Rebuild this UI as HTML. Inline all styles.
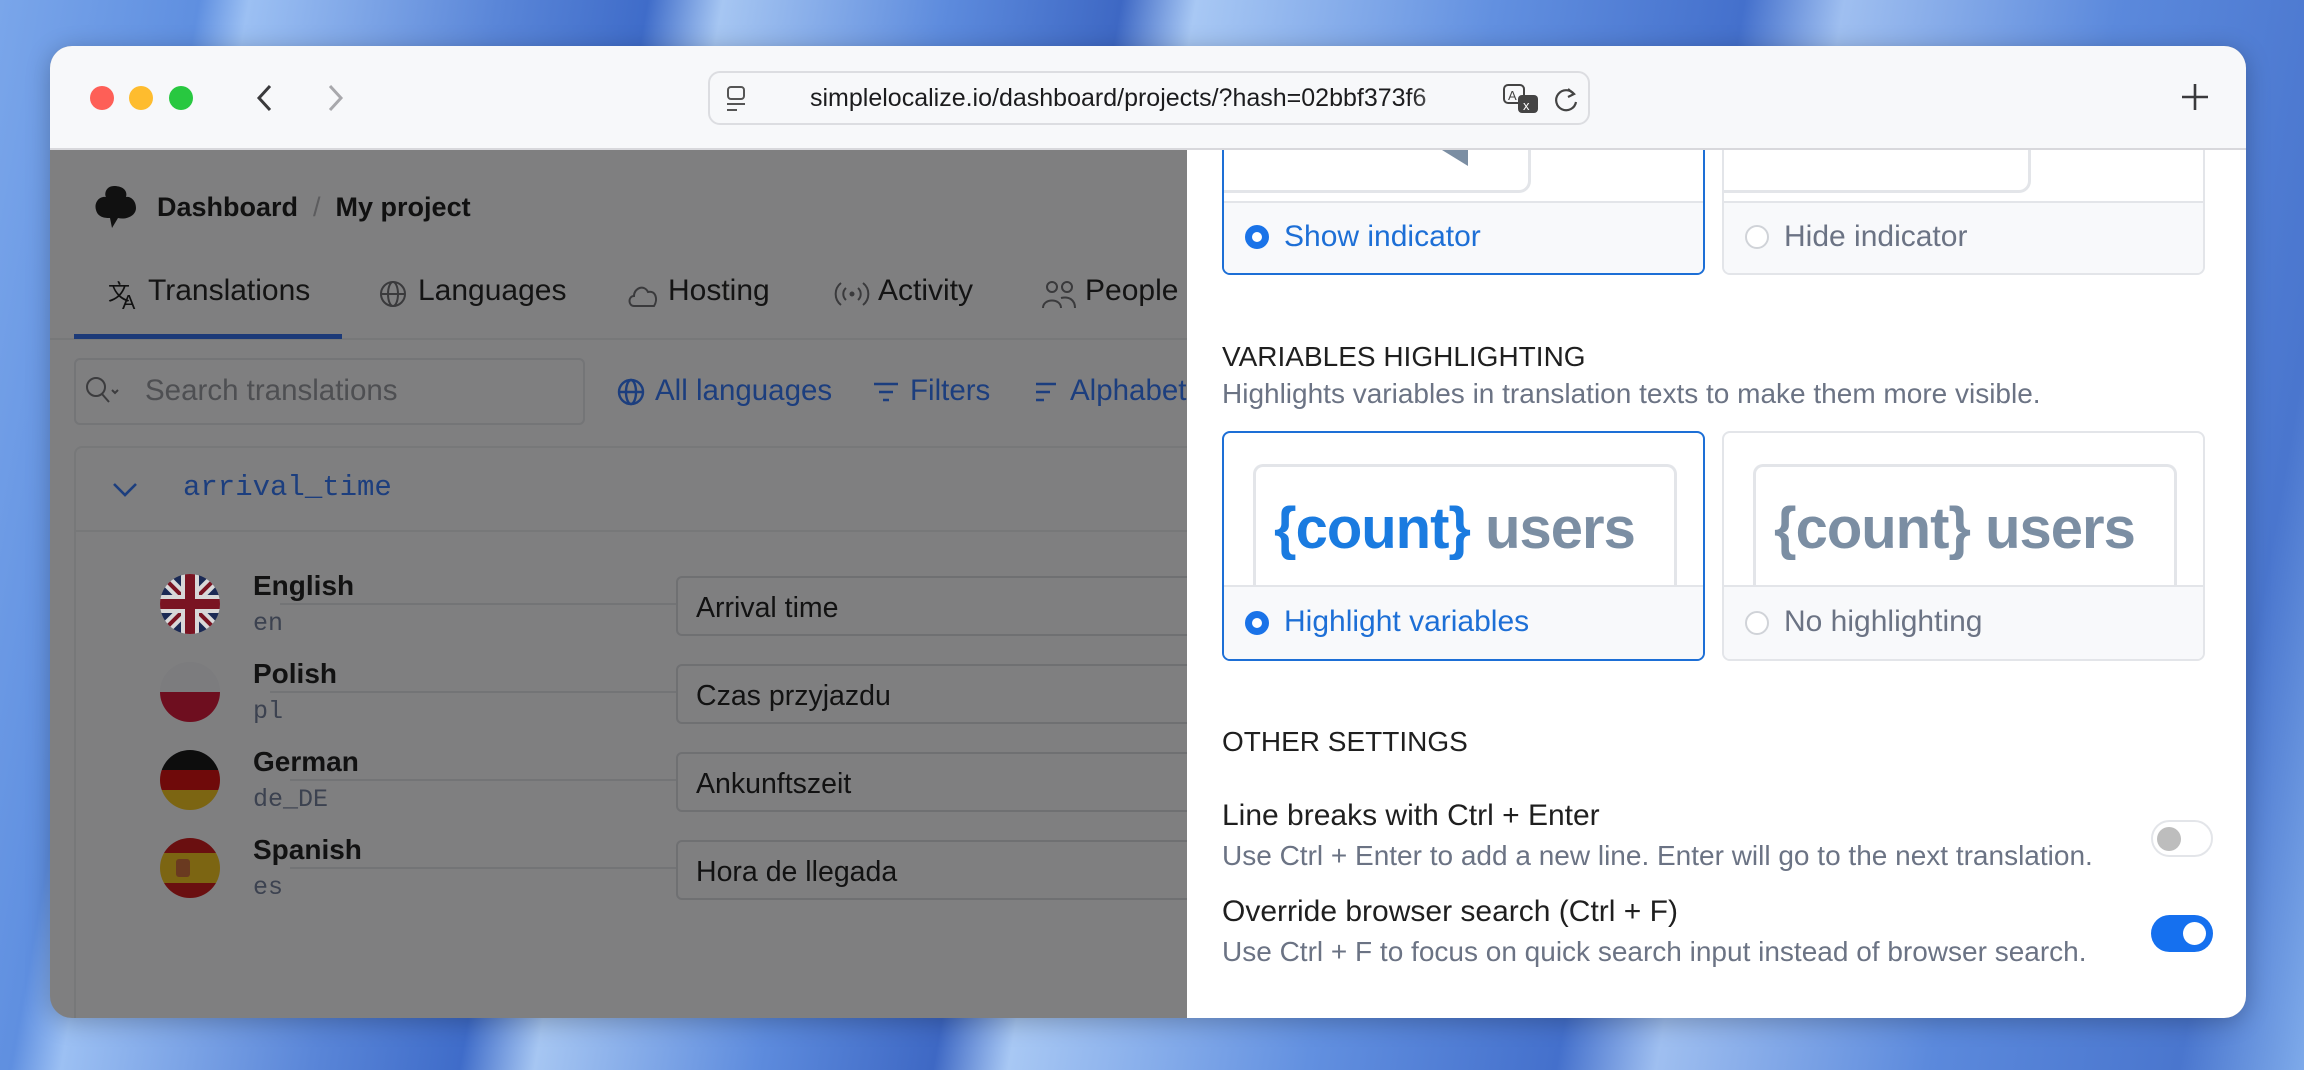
<!DOCTYPE html>
<html><head><meta charset="utf-8"><style>
*{box-sizing:border-box;margin:0;padding:0}
body{width:2304px;height:1070px;overflow:hidden;font-family:"Liberation Sans",sans-serif;position:relative;
background:linear-gradient(100deg,#7aa6ea 0%,#5f8fe0 8%,#9cc0f3 10%,#5a86d8 20%,#3f6cc9 26%,#a6c6f2 29%,#5d8bdd 38%,#3e68c4 45%,#a8c8f4 48%,#6290e0 60%,#4470cc 70%,#9fbff0 74%,#5b89dc 85%,#4a76ce 95%,#7eaaea 100%)}
.abs{position:absolute}
.win{left:50px;top:46px;width:2196px;height:972px;border-radius:22px;overflow:hidden;background:#7f7f80;box-shadow:0 4px 24px rgba(0,0,0,.25)}
.bar{left:0;top:0;width:2196px;height:104px;background:#f7f8fa;border-bottom:2px solid #d8d8dc;z-index:2}
.dot{width:24px;height:24px;border-radius:50%;top:40px}
.url{left:658px;top:25px;width:882px;height:54px;border:2px solid #dcdde1;border-radius:12px;background:#f7f8fa}
.tab{font-size:30px;color:#141414;top:228px}
.ico{stroke:#3a3a3c;fill:none;stroke-width:2}
.blue{color:#1c3e7e}
.panel{left:1137px;top:104px;width:1059px;height:868px;background:#fff;overflow:hidden}
.card{border:2px solid #e3e5e9;border-radius:8px;background:#fff;overflow:hidden}
.card.sel{border-color:#1d6fd6}
.foot{position:absolute;left:0;right:0;bottom:0;background:#f8f9fb;border-top:2px solid #e3e5e9}
.radio{position:absolute;left:21px;width:24px;height:24px;border-radius:50%}
.lbl{position:absolute;left:60px;font-size:30px}
.inner{position:absolute;border:3px solid #e3e5e9;border-bottom:none;border-radius:10px 10px 0 0;background:#fff}
.big{position:absolute;font-size:58px;font-weight:bold;letter-spacing:-1px;white-space:nowrap;color:#7b8ea3}
.h{font-size:28px;color:#1f1f1f;font-weight:500}
.d{font-size:28px;color:#6b7384}
.t{font-size:30px;color:#1f1f1f}
.tog{width:62px;height:37px;border-radius:19px}
.flag{width:60px;height:60px;border-radius:50%;overflow:hidden;left:110px}
.nm{left:203px;font-size:28px;font-weight:bold;color:#121212}
.cd{left:203px;font-family:"Liberation Mono",monospace;font-size:25px;color:#3c4250}
.inp{left:626px;width:560px;height:60px;border:2px solid #6f7072;border-radius:6px;background:#7f7f80;font-size:28.5px;color:#121212;padding:14px 0 0 18px}
.ln{height:2px;background:#737476}
.fl{font-size:29.5px;top:328px}
</style></head><body>
<div class="abs win">
 <div class="abs bar">
  <div class="abs dot" style="left:40px;background:#fe5f57"></div>
  <div class="abs dot" style="left:79px;background:#febc2e"></div>
  <div class="abs dot" style="left:119px;background:#28c840"></div>
  <svg class="abs" style="left:200px;top:36px" width="30" height="32"><path d="M20 4 L9 16 L20 28" stroke="#3a3a3c" stroke-width="3" fill="none"/></svg>
  <svg class="abs" style="left:270px;top:36px" width="30" height="32"><path d="M10 4 L21 16 L10 28" stroke="#a8a8ac" stroke-width="3" fill="none"/></svg>
  <div class="abs url">
   <svg class="abs" style="left:14px;top:12px" width="26" height="28"><rect x="4" y="2" width="16" height="12" rx="3" stroke="#555" stroke-width="2" fill="none"/><path d="M3 19h18M3 25h10" stroke="#555" stroke-width="2"/></svg>
   <div class="abs" style="left:100px;top:11px;font-size:25px;color:#1c1c1e;white-space:nowrap;width:680px;overflow:hidden;-webkit-mask-image:linear-gradient(90deg,#000 88%,transparent)">simplelocalize.io/dashboard/projects/?hash=02bbf373f6</div>
   <svg class="abs" style="left:792px;top:10px" width="40" height="34"><rect x="2" y="2" width="20" height="18" rx="4" stroke="#444" stroke-width="2" fill="none"/><text x="6" y="17" font-size="13" font-family="Liberation Sans" fill="#444">A</text><rect x="16" y="12" width="20" height="18" rx="4" fill="#444"/><text x="21" y="27" font-size="13" font-family="Liberation Sans" fill="#fff">x</text></svg>
   <svg class="abs" style="left:842px;top:12px" width="30" height="30"><path d="M22 9 A10 10 0 1 0 24 17" stroke="#444" stroke-width="2.2" fill="none"/><path d="M16 4 L22 9 L16 12" stroke="#444" stroke-width="2.2" fill="none"/></svg>
  </div>
  <svg class="abs" style="left:2130px;top:36px" width="30" height="30"><path d="M15 2v26M2 15h26" stroke="#3a3a3c" stroke-width="2.6"/></svg>
 </div>
 <svg class="abs" style="left:42px;top:138px" width="46" height="48"><path d="M22 2 C14 2 12 10 14 13 C6 12 2 20 4 26 C6 34 14 34 18 34 L20 44 L26 34 C34 36 44 32 44 24 C44 16 38 12 34 13 C36 6 30 2 22 2Z" fill="#111"/></svg>
 <div class="abs" style="left:107px;top:146px;font-size:27px;font-weight:600;color:#111">Dashboard <span style="color:#5c5c5e;font-weight:400">&nbsp;/&nbsp;</span> My project</div>
 <svg class="abs" style="left:58px;top:232px" width="34" height="34"><text x="0" y="22" font-size="22" fill="#111" font-family="Noto Sans CJK SC">文</text><text x="14" y="31" font-size="20" fill="#111" font-family="Liberation Sans">A</text></svg>
 <div class="abs tab" style="left:98px">Translations</div>
 <svg class="abs" style="left:327px;top:232px" width="32" height="32"><circle cx="16" cy="16" r="12" class="ico"/><ellipse cx="16" cy="16" rx="5" ry="12" class="ico"/><path d="M4 16h24" class="ico"/></svg>
 <div class="abs tab" style="left:368px">Languages</div>
 <svg class="abs" style="left:576px;top:234px" width="34" height="30"><path d="M8 26 C2 26 2 16 8 16 C8 8 18 4 22 12 C30 10 32 20 28 26 Z" class="ico"/></svg>
 <div class="abs tab" style="left:618px">Hosting</div>
 <svg class="abs" style="left:784px;top:232px" width="36" height="32"><circle cx="18" cy="16" r="2.5" fill="#3a3a3c"/><path d="M12 10 A8 8 0 0 0 12 22 M24 10 A8 8 0 0 1 24 22 M7 5 A14 14 0 0 0 7 27 M29 5 A14 14 0 0 1 29 27" class="ico"/></svg>
 <div class="abs tab" style="left:828px">Activity</div>
 <svg class="abs" style="left:991px;top:232px" width="38" height="34"><circle cx="11" cy="9" r="5" class="ico"/><circle cx="26" cy="9" r="5" class="ico"/><path d="M2 30 C2 20 20 20 20 30 M20 20 C28 18 34 22 34 30" class="ico"/></svg>
 <div class="abs tab" style="left:1035px">People</div>
 <div class="abs" style="left:0;top:292px;width:1137px;height:2px;background:#777879"></div>
 <div class="abs" style="left:24px;top:288px;width:268px;height:5px;background:#1c3a78"></div>
 <div class="abs" style="left:24px;top:312px;width:511px;height:67px;border:2px solid #747577;border-radius:6px"></div>
 <svg class="abs" style="left:34px;top:328px" width="40" height="34"><circle cx="12" cy="13" r="9" stroke="#3c3c3e" stroke-width="2" fill="none"/><path d="M18 20 L25 28 M28 16 l3 3 3-3" stroke="#3c3c3e" stroke-width="2" fill="none"/></svg>
 <div class="abs fl" style="left:95px;color:#4e4f52">Search translations</div>
 <svg class="abs" style="left:565px;top:330px" width="32" height="32"><circle cx="16" cy="16" r="12" stroke="#1c3e7e" stroke-width="2.4" fill="none"/><ellipse cx="16" cy="16" rx="5" ry="12" stroke="#1c3e7e" stroke-width="2.4" fill="none"/><path d="M4 16h24" stroke="#1c3e7e" stroke-width="2.4"/></svg>
 <div class="abs blue fl" style="left:605px">All languages</div>
 <svg class="abs" style="left:820px;top:330px" width="32" height="32"><path d="M4 8h24M9 16h14M13 24h6" stroke="#1c3e7e" stroke-width="2.6"/></svg>
 <div class="abs blue fl" style="left:860px">Filters</div>
 <svg class="abs" style="left:982px;top:330px" width="32" height="32"><path d="M4 8h20M4 16h14M4 24h8" stroke="#1c3e7e" stroke-width="2.6"/></svg>
 <div class="abs blue fl" style="left:1020px">Alphabetical</div>
 <div class="abs" style="left:24px;top:400px;width:1200px;height:620px;border:2px solid #777879;border-radius:8px"></div>
 <div class="abs" style="left:26px;top:484px;width:1111px;height:2px;background:#777879"></div>
 <svg class="abs" style="left:60px;top:430px" width="30" height="26"><path d="M4 8 L15 19 L26 8" stroke="#1c3e7e" stroke-width="2.6" fill="none"/></svg>
 <div class="abs blue" style="left:133px;top:425px;font-family:'Liberation Mono',monospace;font-size:29px">arrival_time</div>

 <div class="abs flag" style="top:528px"><svg width="60" height="60" viewBox="0 0 60 60"><rect width="60" height="60" fill="#1b2a55"/><path d="M0 0L60 60M60 0L0 60" stroke="#d8d8d8" stroke-width="12"/><path d="M0 0L60 60M60 0L0 60" stroke="#7a1422" stroke-width="4"/><path d="M30 0V60M0 30H60" stroke="#d8d8d8" stroke-width="18"/><path d="M30 0V60M0 30H60" stroke="#7a1422" stroke-width="10"/></svg></div>
 <div class="abs nm" style="top:524px">English</div><div class="abs cd" style="top:563px">en</div>
 <div class="abs ln" style="left:230px;top:557px;width:396px"></div>
 <div class="abs inp" style="top:530px">Arrival time</div>

 <div class="abs flag" style="top:616px"><div style="height:30px;background:#7c7c7e"></div><div style="height:30px;background:#6e0e1f"></div></div>
 <div class="abs nm" style="top:612px">Polish</div><div class="abs cd" style="top:651px">pl</div>
 <div class="abs ln" style="left:220px;top:645px;width:406px"></div>
 <div class="abs inp" style="top:618px">Czas przyjazdu</div>

 <div class="abs flag" style="top:704px"><div style="height:20px;background:#0d0d0d"></div><div style="height:20px;background:#6f0a0a"></div><div style="height:20px;background:#7c6512"></div></div>
 <div class="abs nm" style="top:700px">German</div><div class="abs cd" style="top:739px">de_DE</div>
 <div class="abs ln" style="left:240px;top:733px;width:386px"></div>
 <div class="abs inp" style="top:706px">Ankunftszeit</div>

 <div class="abs flag" style="top:792px"><div style="height:15px;background:#6a0f10"></div><div style="height:30px;background:#7c6512;position:relative"><div style="position:absolute;left:16px;top:6px;width:14px;height:18px;background:#6a3a20;border-radius:3px"></div></div><div style="height:15px;background:#6a0f10"></div></div>
 <div class="abs nm" style="top:788px">Spanish</div><div class="abs cd" style="top:827px">es</div>
 <div class="abs ln" style="left:240px;top:821px;width:386px"></div>
 <div class="abs inp" style="top:794px">Hora de llegada</div>

 <div class="abs panel">
  <div class="abs card sel" style="left:35px;top:-40px;width:483px;height:165px;border-top:none;border-radius:0 0 8px 8px">
   <div class="inner" style="left:-3px;top:0;width:310px;height:83px;border:3px solid #e3e5e9;border-top:none;border-left:none;border-radius:0 0 12px 0"></div>
   <svg class="abs" style="left:218px;top:40px" width="28" height="18"><path d="M0 0H26V16Z" fill="#7b8ea3"/></svg>
   <div class="foot" style="height:72px"><div class="radio" style="top:22px;border:7px solid #1a73e8;background:#fff"></div><div class="lbl" style="top:17px;color:#1d6fd6">Show indicator</div></div>
  </div>
  <div class="abs card" style="left:535px;top:-40px;width:483px;height:165px;border-top:none;border-radius:0 0 8px 8px">
   <div class="inner" style="left:-3px;top:0;width:310px;height:83px;border:3px solid #e3e5e9;border-top:none;border-left:none;border-radius:0 0 12px 0"></div>
   <div class="foot" style="height:72px"><div class="radio" style="top:22px;border:2px solid #d0d3d8;background:#fff"></div><div class="lbl" style="top:17px;color:#6b7384">Hide indicator</div></div>
  </div>
  <div class="abs h" style="left:35px;top:191px">VARIABLES HIGHLIGHTING</div>
  <div class="abs d" style="left:35px;top:228px">Highlights variables in translation texts to make them more visible.</div>
  <div class="abs card sel" style="left:35px;top:281px;width:483px;height:230px">
   <div class="inner" style="left:29px;top:31px;width:424px;height:125px"></div>
   <div class="big" style="left:50px;top:62px"><span style="color:#1a7be0">{count}</span> users</div>
   <div class="foot" style="height:74px"><div class="radio" style="top:24px;border:7px solid #1a73e8;background:#fff"></div><div class="lbl" style="top:18px;color:#1d6fd6">Highlight variables</div></div>
  </div>
  <div class="abs card" style="left:535px;top:281px;width:483px;height:230px">
   <div class="inner" style="left:29px;top:31px;width:424px;height:125px"></div>
   <div class="big" style="left:50px;top:62px">{count} users</div>
   <div class="foot" style="height:74px"><div class="radio" style="top:24px;border:2px solid #d0d3d8;background:#fff"></div><div class="lbl" style="top:18px;color:#6b7384">No highlighting</div></div>
  </div>
  <div class="abs h" style="left:35px;top:576px">OTHER SETTINGS</div>
  <div class="abs t" style="left:35px;top:649px">Line breaks with Ctrl + Enter</div>
  <div class="abs d" style="left:35px;top:690px">Use Ctrl + Enter to add a new line. Enter will go to the next translation.</div>
  <div class="abs tog" style="left:964px;top:670px;border:2px solid #e3e5e9;background:#fff"><div class="abs" style="left:4px;top:5px;width:24px;height:24px;border-radius:50%;background:#bdbdbd"></div></div>
  <div class="abs t" style="left:35px;top:745px">Override browser search (Ctrl + F)</div>
  <div class="abs d" style="left:35px;top:786px">Use Ctrl + F to focus on quick search input instead of browser search.</div>
  <div class="abs tog" style="left:964px;top:765px;background:#1570ef"><div class="abs" style="left:32px;top:7px;width:23px;height:23px;border-radius:50%;background:#fff"></div></div>
 </div>
</div>
</body></html>
